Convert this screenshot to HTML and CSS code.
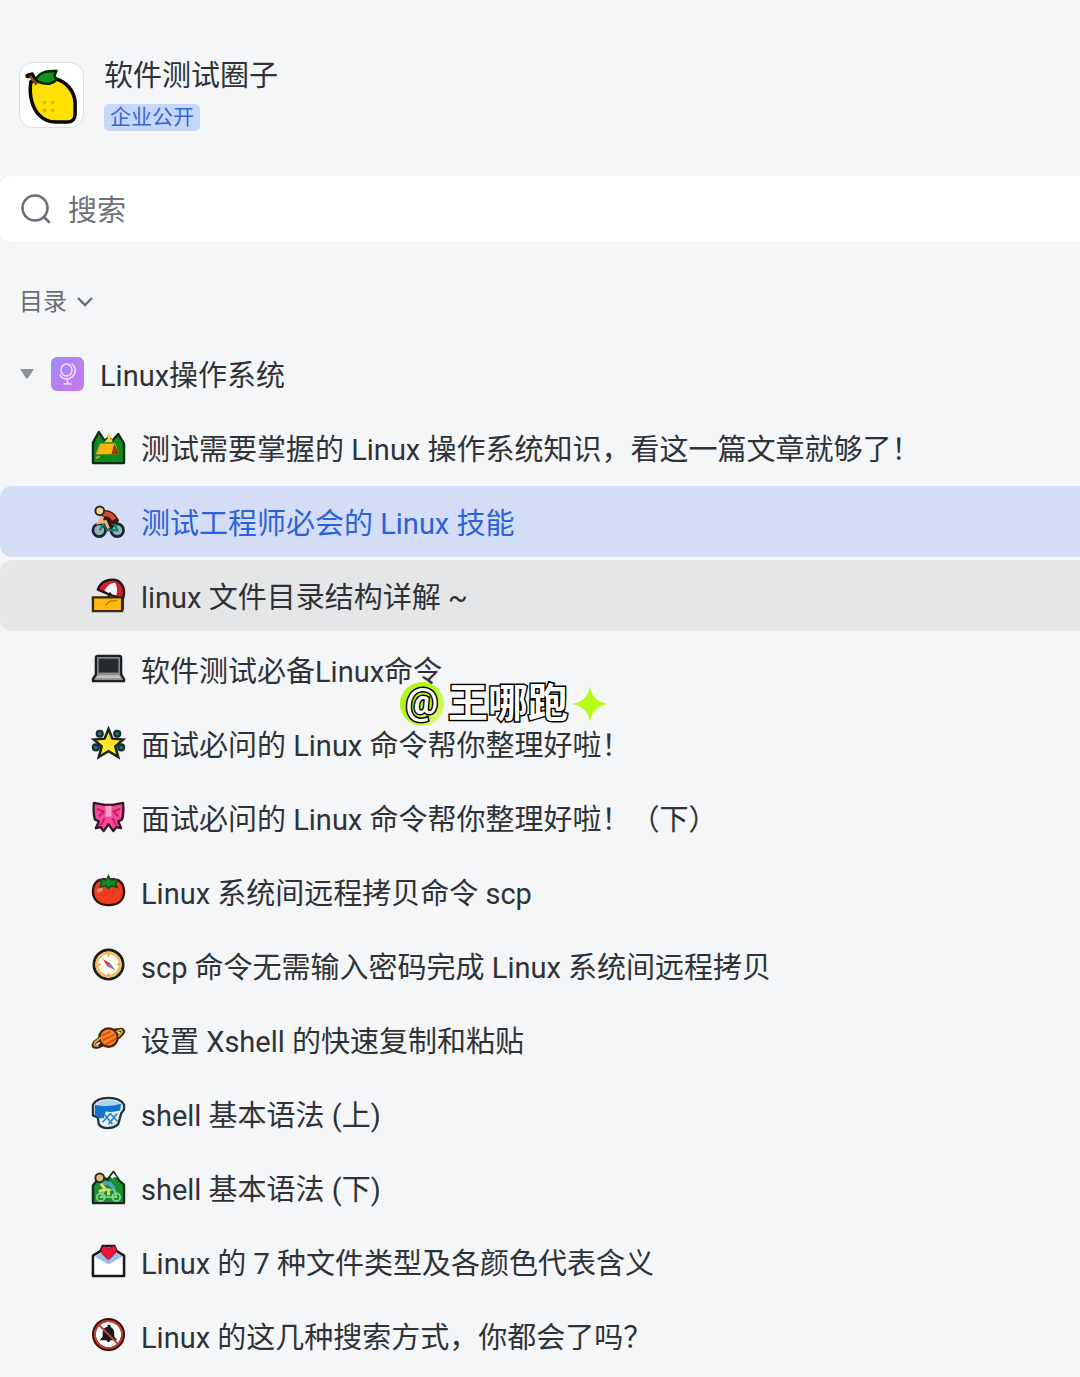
FILE: index.html
```html
<!DOCTYPE html>
<html lang="zh-CN">
<head>
    <meta charset="UTF-8">
    <meta name="viewport" content="width=device-width, initial-scale=1.0">
    <title>软件测试圈子</title>
    <link rel="stylesheet" href="styles.css">
</head>
<body>
    <header class="space-header">
        <div class="space-logo">
            <svg viewBox="0 0 64 64" aria-hidden="true">
                <path d="M11 19C10 26 10 32 12 39C15 50 23 60 36 60H48C53 60 56 57 56 52V40C55 28 47 19 36 16L20 17Z" fill="#ffe100" stroke="#080a02" stroke-width="3.6" stroke-linejoin="round"/>
                <path d="M16 17C20 9 27 8 37 8L35 13L37 17C32 22 24 22 16 18Z" fill="#13931c" stroke="#062b08" stroke-width="2.600" stroke-linejoin="round"/>
                <path d="M8 13L12 12L15 18" fill="none" stroke="#080a02" stroke-width="5" stroke-linecap="round" stroke-linejoin="round"/>
                <path d="M10 13L17 22" stroke="#8a4a20" stroke-width="3"/>
                <g fill="#dcb900"><circle cx="25" cy="40" r="2"/><circle cx="33" cy="40" r="2"/><circle cx="25" cy="48" r="2"/><circle cx="33" cy="48" r="2"/></g>
            </svg>
        </div>
        <div class="space-info">
            <h1>软件测试圈子</h1>
            <span class="badge">企业公开</span>
        </div>
    </header>

    <label class="search">
        <svg class="search-icon" viewBox="0 0 32 32" aria-label="搜索">
            <circle cx="15" cy="15" r="12.5"/>
            <path d="M24 24L29 29"/>
        </svg>
        <input type="search" placeholder="搜索">
    </label>

    <nav class="catalog">
        <button type="button" class="catalog-title">
            目录
            <svg viewBox="0 0 18 18" aria-hidden="true"><path d="M2 5L9 12L16 5"/></svg>
        </button>

        <div class="root">
            <button type="button" class="toggle" aria-label="收起">
                <svg viewBox="0 0 14 10" aria-hidden="true"><path d="M1 0H13Q14 0 13.4 1L8 9Q7 10 6 9L.6 1Q0 0 1 0Z"/></svg>
            </button>
            <a class="root-link" href="#linux">
                <svg class="root-icon" viewBox="0 0 33 34" aria-hidden="true">
                    <defs>
                        <linearGradient id="purple" x1="0" y1="0" x2="1" y2="1">
                            <stop offset="0" stop-color="#a18af6"/>
                            <stop offset="1" stop-color="#cb78ee"/>
                        </linearGradient>
                    </defs>
                    <rect width="33" height="34" rx="6" fill="url(#purple)"/>
                    <g fill="none" stroke="#f5dcff" stroke-width="1.5" stroke-linecap="round">
                        <ellipse cx="15.500" cy="13" rx="5.500" ry="6"/>
                        <path d="M21 7C27 12 24 21 16 22Q11 22 9 18M16.500 22V26M13 27H20"/>
                    </g>
                </svg>
                Linux操作系统
            </a>
        </div>

        <ul class="doc-list">
            <li>
                <a class="doc" href="#doc1">
                    <svg viewBox="0 0 36 36" aria-hidden="true">
                        <path d="M2 34V13L8 2L14 11L18 8L22 11L28 4L34 14V34Z" fill="#0b8a20" stroke="#102b12" stroke-width="2.400" stroke-linejoin="round"/>
                        <path d="M17 5Q21 7 17 11H22" fill="none" stroke="#f5d340" stroke-width="3"/>
                        <path d="M5 25L10 14H25L29 25Z" fill="#ffb414"/>
                        <path d="M21 25L24 14L29 25Z" fill="#8c3e0b"/>
                        <path d="M10 14L6 25M5 29L9 27" stroke="#d9a623" stroke-width="2"/>
                    </svg>
                    测试需要掌握的 Linux 操作系统知识，看这一篇文章就够了！
                </a>
            </li>
            <li>
                <a class="doc active" href="#doc2" aria-current="page">
                    <svg viewBox="0 0 36 36" aria-hidden="true">
                        <g fill="#8fb4b8" stroke="#17292d" stroke-width="2.800"><circle cx="8.500" cy="27" r="6.500"/><circle cx="27" cy="27" r="6.500"/></g>
                        <path d="M9 27L14 19L23 18L27 27H17L12 18M17 27L23 18" fill="none" stroke="#138075" stroke-width="2.400"/>
                        <path d="M11 10Q20 8 25 17L16 16L19 25" fill="none" stroke="#351713" stroke-width="7" stroke-linejoin="round"/>
                        <path d="M12 10Q20 9 24 16" fill="none" stroke="#dc4832" stroke-width="5"/>
                        <path d="M12 13L8 19L15 18L18 25" fill="none" stroke="#efb275" stroke-width="3"/>
                        <circle cx="9" cy="7" r="4.500" fill="#f4d38b" stroke="#292b25" stroke-width="2"/>
                    </svg>
                    测试工程师必会的 Linux 技能
                </a>
            </li>
            <li>
                <a class="doc hovered" href="#doc3">
                    <svg viewBox="0 0 36 36" aria-hidden="true">
                        <path d="M24 12L28 33H34V13Z" fill="#671419"/>
                        <path d="M7 12C10 2 21 0 28 3C34 7 35 14 33 21L19 17Z" fill="#d51d35" stroke="#291014" stroke-width="2.400" stroke-linejoin="round"/>
                        <path d="M14 13C17 7 21 5 25 5Q28 11 26 18L19 16Z" fill="#fff"/>
                        <path d="M20 15L17 21" stroke="#222" stroke-width="2.500"/>
                        <path d="M2 20H32V34H2Z" fill="#ffb80d" stroke="#392805" stroke-width="2.400"/>
                        <path d="M15 28L19 24L27 23" fill="none" stroke="#b77908" stroke-width="1.500"/>
                    </svg>
                    linux 文件目录结构详解 ~
                </a>
            </li>
            <li>
                <a class="doc" href="#doc4">
                    <svg viewBox="0 0 36 36" aria-hidden="true">
                        <path d="M5 6Q5 4 7 4H29Q31 4 31 6V23L34 28V30H2V28L5 23Z" fill="#8d8e8f" stroke="#1d1f21" stroke-width="2.400" stroke-linejoin="round"/>
                        <rect x="8" y="7" width="20" height="14" fill="#25292b" stroke="#505456"/>
                        <path d="M7 24H29L31 27H5Z" fill="#bfc1c1"/>
                    </svg>
                    软件测试必备Linux命令
                </a>
            </li>
            <li>
                <a class="doc" href="#doc5">
                    <svg viewBox="0 0 36 36" aria-hidden="true">
                        <g fill="#2f6f78" stroke="#14302f" stroke-width="2.400"><circle cx="9" cy="8" r="3"/><circle cx="27" cy="8" r="3"/><circle cx="5" cy="22" r="3"/><circle cx="31" cy="22" r="3"/></g>
                        <path d="M18 3L22 13L33 14L25 21L28 32L18 26L8 32L11 21L3 14L14 13Z" fill="#ffe52d" stroke="#22231a" stroke-width="2.600"/>
                    </svg>
                    面试必问的 Linux 命令帮你整理好啦！
                </a>
            </li>
            <li>
                <a class="doc" href="#doc6">
                    <svg viewBox="0 0 36 36" aria-hidden="true">
                        <path d="M3 3L14 5H22L33 3Q34 13 32 20L28 22L31 29L26 28L23 32L18 25L13 32L10 28L5 29L8 22L4 20Q2 13 3 3Z" fill="#f24a98" stroke="#371323" stroke-width="2.400" stroke-linejoin="round"/>
                        <path d="M15 6H21V17H15Z" fill="#ff9fca"/>
                        <path d="M6 9L13 12L8 17M30 9L23 12L28 17M14 19L10 26M22 19L26 26" fill="none" stroke="#c51c62" stroke-width="2"/>
                    </svg>
                    面试必问的 Linux 命令帮你整理好啦！（下）
                </a>
            </li>
            <li>
                <a class="doc" href="#doc7">
                    <svg viewBox="0 0 36 36" aria-hidden="true">
                        <path d="M18 6C7 3 2 10 2 18C2 27 9 32 18 32C28 32 34 27 34 18C34 9 28 3 18 6Z" fill="#f03d21" stroke="#34100b" stroke-width="2.400"/>
                        <path d="M18 2L20 6L28 6L25 10L27 14L21 12L18 15L15 12L9 14L11 9L8 6L16 6Z" fill="#178a28" stroke="#124817" stroke-width="1.500"/>
                        <path d="M8 17L10 16" stroke="#ff896b" stroke-width="4" stroke-linecap="round"/>
                    </svg>
                    Linux 系统间远程拷贝命令 scp
                </a>
            </li>
            <li>
                <a class="doc" href="#doc8">
                    <svg viewBox="0 0 36 36" aria-hidden="true">
                        <circle cx="18" cy="17" r="15" fill="#fffdf5" stroke="#211d12" stroke-width="3"/>
                        <circle cx="18" cy="17" r="12" fill="none" stroke="#eec06b" stroke-width="3"/>
                        <path d="M18 6V9M18 26V29M7 17H10M27 17H30" stroke="#d09b43" stroke-width="1.500"/>
                        <path d="M12 11L20 16L17 19Z" fill="#db3153"/>
                        <path d="M20 16L25 23L17 19Z" fill="#737b98"/>
                    </svg>
                    scp 命令无需输入密码完成 Linux 系统间远程拷贝
                </a>
            </li>
            <li>
                <a class="doc" href="#doc9">
                    <svg viewBox="0 0 36 36" aria-hidden="true">
                        <path d="M12 15L4 21Q0 27 8 25L29 15Q36 9 31 8L23 9" fill="none" stroke="#302716" stroke-width="4"/>
                        <circle cx="18" cy="16" r="9.500" fill="#f7802c" stroke="#4d230d" stroke-width="2.400"/>
                        <path d="M11 14L20 10M12 19L24 13M15 23L26 17" stroke="#da5018" stroke-width="2"/>
                        <path d="M10 16L4 21Q2 26 8 24M26 10L31 8Q34 10 28 15" fill="none" stroke="#dba32b" stroke-width="2"/>
                    </svg>
                    设置 Xshell 的快速复制和粘贴
                </a>
            </li>
            <li>
                <a class="doc" href="#doc10">
                    <svg viewBox="0 0 36 36" aria-hidden="true">
                        <path d="M2 9Q6 2 18 2Q30 2 34 9V14L31 18L28 29Q24 33 17 33Q11 33 8 29L7 22L2 20Z" fill="#e3f0f6" stroke="#25323c" stroke-width="2.400" stroke-linejoin="round"/>
                        <path d="M6 7Q18 1 30 7L28 10H8Z" fill="#a9d5ee"/>
                        <path d="M4 9Q17 12 31 8L30 15Q22 17 15 16L13 23H8L4 19Z" fill="#1673cb"/>
                        <path d="M14 19L22 29M20 18L27 26M27 18L18 29M20 18L12 27" fill="none" stroke="#3484c4" stroke-width="1.800"/>
                    </svg>
                    shell 基本语法 (上)
                </a>
            </li>
            <li>
                <a class="doc" href="#doc11">
                    <svg viewBox="0 0 36 36" aria-hidden="true">
                        <path d="M2 34V16L10 6L17 10L23 2L29 11L34 15V34Z" fill="#169134" stroke="#182b1b" stroke-width="2.400" stroke-linejoin="round"/>
                        <path d="M20 7L23 3L27 8L24 7L22 9Z" fill="#fff"/>
                        <g fill="none" stroke="#8bd18b" stroke-width="1.800"><circle cx="10" cy="28" r="4"/><circle cx="26" cy="28" r="4"/><path d="M10 28L14 21L24 20L26 28H18Z"/></g>
                        <path d="M10 13L19 14L24 19" fill="none" stroke="#48a5ba" stroke-width="4"/>
                        <path d="M10 14L15 20L8 22M18 19V26" fill="none" stroke="#e9d267" stroke-width="3"/>
                        <circle cx="9" cy="8" r="4.500" fill="#e2bd7b" stroke="#292d27" stroke-width="2"/>
                    </svg>
                    shell 基本语法 (下)
                </a>
            </li>
            <li>
                <a class="doc" href="#doc12">
                    <svg viewBox="0 0 36 36" aria-hidden="true">
                        <path d="M2 12L10 7L12 2H24L26 7L34 12V33H2Z" fill="#fff" stroke="#17191c" stroke-width="2.600" stroke-linejoin="round"/>
                        <path d="M4 13L10 9H27L32 13L18 21Z" fill="#9ebcec"/>
                        <path d="M18 16C12 11 9 8 11 4C13 1 17 2 18 5C20 2 25 1 26 5C27 8 22 13 18 16Z" fill="#e91635" stroke="#761326"/>
                    </svg>
                    Linux 的 7 种文件类型及各颜色代表含义
                </a>
            </li>
            <li>
                <a class="doc" href="#doc13">
                    <svg viewBox="0 0 36 36" aria-hidden="true">
                        <circle cx="18" cy="17" r="15" fill="#fff" stroke="#38120f" stroke-width="4"/>
                        <circle cx="18" cy="17" r="14" fill="none" stroke="#c9402c" stroke-width="2"/>
                        <path d="M9 23L12 19V15Q12 10 17 9V7H20V9Q24 11 24 16V19L27 23H20Q18 27 16 23Z" fill="#17191a"/>
                        <path d="M8 7L28 27" stroke="#c9402c" stroke-width="2"/>
                    </svg>
                    Linux 的这几种搜索方式，你都会了吗？
                </a>
            </li>
        </ul>
    </nav>

    <!-- 作者水印 -->
    <div class="watermark">
        <span class="watermark-at">@</span>
        <span>王哪跑</span>
        <svg viewBox="0 0 36 36" aria-hidden="true"><path d="M18 0Q20 15 36 18Q20 21 18 36Q16 21 0 18Q16 15 18 0Z"/></svg>
    </div>
</body>
</html>
```
FILE: styles.css
```css
* {
    box-sizing: border-box;
}
body {
    position: relative;
    margin: 0;
    padding-top: 56px;
    background-color: #f4f6f8;
    color: #2f3237;
    font-family: Roboto, "Noto Sans CJK SC", sans-serif;
    font-size: 29px;
    line-height: 40px;
    overflow-x: hidden;
}
a {
    color: inherit;
    text-decoration: none;
}
button {
    padding: 0;
    border: none;
    background: none;
    font: inherit;
    cursor: pointer;
}
svg {
    display: block;
    flex-shrink: 0;
}

/* 顶部空间信息 */
.space-header {
    display: flex;
    align-items: center;
    gap: 20px;
    height: 78px;
    padding: 0 19px;
}
.space-logo {
    width: 65px;
    height: 66px;
    border: 1px solid #dcdee0;
    border-radius: 14px;
    background-color: #fff;
    overflow: hidden;
}
.space-info {
    display: flex;
    flex-direction: column;
    align-items: flex-start;
    gap: 8px;
    padding-bottom: 4px;
}
h1 {
    margin: 0;
    font-size: 29px;
    font-weight: 400;
    line-height: 40px;
}
.badge {
    padding: 0 6px;
    border-radius: 5px;
    background-color: #c7d7fa;
    color: #3566d6;
    font-size: 21px;
    line-height: 27px;
}

/* 搜索框 */
.search {
    display: flex;
    align-items: center;
    gap: 16px;
    height: 66px;
    margin-top: 42px;
    padding: 0 20px;
    border-radius: 12px 0 0 12px;
    background-color: #fff;
}
.search-icon {
    width: 32px;
    height: 32px;
    fill: none;
    stroke: #6b7078;
    stroke-width: 2.6;
    stroke-linecap: round;
}
.search input {
    flex: 1;
    min-width: 0;
    padding: 4px 0 0;
    border: none;
    outline: none;
    background: none;
    font: inherit;
    color: inherit;
}
.search input::placeholder {
    color: #6f7379;
    opacity: 1;
}

/* 目录 */
.catalog-title {
    display: flex;
    align-items: center;
    gap: 9px;
    margin: 40px 0 16px 19px;
    color: #696e76;
    font-size: 24px;
    line-height: 40px;
}
.catalog-title svg {
    width: 18px;
    height: 18px;
    fill: none;
    stroke: #646a73;
    stroke-width: 2.4;
}
.root {
    display: flex;
    align-items: center;
    gap: 17px;
    height: 71px;
    margin-bottom: 3px;
    padding-left: 20px;
}
.toggle svg {
    width: 14px;
    height: 10px;
    fill: #8d9197;
}
.root-link {
    display: flex;
    align-items: center;
    gap: 16px;
    padding-top: 4px;
}
.root-icon {
    width: 33px;
    height: 34px;
    margin-bottom: 4px;
}
.doc-list {
    display: flex;
    flex-direction: column;
    gap: 3px;
    margin: 0;
    padding: 0;
    list-style: none;
}
.doc {
    display: flex;
    align-items: center;
    gap: 15px;
    height: 71px;
    padding: 4px 0 0 91px;
    border-radius: 12px 0 0 12px;
    white-space: nowrap;
}
.doc svg {
    width: 35px;
    height: 35px;
    margin-bottom: 4px;
}
.doc.hovered,
.doc:hover {
    background-color: #e5e6e8;
}
.doc.active {
    background-color: #d3ddf6;
    color: #2c61dc;
}

/* 水印 */
.watermark {
    position: absolute;
    top: 682px;
    left: 400px;
    display: flex;
    align-items: center;
    gap: 4px;
    color: #fff;
    font-size: 40px;
    font-weight: 700;
    line-height: 44px;
    -webkit-text-stroke: 3px #000;
    paint-order: stroke fill;
    pointer-events: none;
}
.watermark-at {
    width: 44px;
    height: 44px;
    border-radius: 50%;
    background: linear-gradient(135deg, #b2f719 40%, #e4fb85);
    font-size: 36px;
    line-height: 40px;
    text-align: center;
}
.watermark svg {
    width: 36px;
    height: 36px;
    fill: #b9fb18;
}
```
